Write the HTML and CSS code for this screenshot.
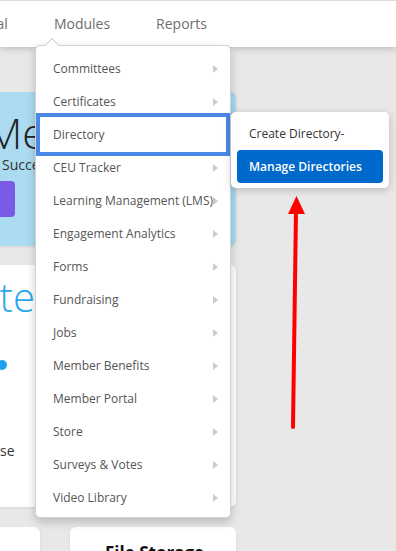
FILE: index.html
```html
<!DOCTYPE html>
<html lang="en">

<head>
    <meta charset="UTF-8">
    <meta name="viewport" content="width=device-width, initial-scale=1.0">
    <title>Modules</title>
    <link rel="stylesheet" href="styles.css">
</head>

<body>
    <!-- Top navigation -->
    <header class="topbar">
        <nav class="main-nav">
            <a href="#">Portal</a>
            <a href="#">Modules</a>
            <a href="#">Reports</a>
        </nav>
    </header>

    <!-- Dashboard cards -->
    <main class="content">
        <section class="card welcome">
            <h1>Members</h1>
            <p>Success starts here</p>
            <button class="btn-primary">Get started</button>
        </section>

        <section class="card updates">
            <h2>Updates</h2>
            <span class="dot"></span>
            <p>Browse</p>
        </section>

        <div class="card-row">
            <section class="card small"></section>
            <section class="card small">
                <h3>File Storage</h3>
            </section>
        </div>
    </main>

    <!-- Modules dropdown -->
    <ul class="dropdown">
        <li>Committees</li>
        <li>Certificates</li>
        <li class="active">Directory</li>
        <li>CEU Tracker</li>
        <li>Learning Management (LMS)</li>
        <li>Engagement Analytics</li>
        <li>Forms</li>
        <li>Fundraising</li>
        <li>Jobs</li>
        <li>Member Benefits</li>
        <li>Member Portal</li>
        <li>Store</li>
        <li>Surveys &amp; Votes</li>
        <li>Video Library</li>
    </ul>

    <div class="submenu">
        <a href="#" class="sub-item">Create Directory-</a>
        <a href="#" class="sub-item selected">Manage Directories</a>
    </div>

    <!-- Annotation arrow -->
    <svg class="annotation" width="396" height="551" viewBox="0 0 396 551">
        <line x1="296" y1="210" x2="293" y2="427" stroke="#ff0000" stroke-width="4" stroke-linecap="round" />
        <polygon points="296.5,196 288,214 305,214" fill="#ff0000" />
    </svg>
</body>

</html>
```

FILE: styles.css
```css
body {
    margin: 0;
    height: 551px;
    overflow: hidden;
    font-family: 'Open Sans', 'Liberation Sans', sans-serif;
    background-color: #e8e8e8;
    color: #333;
}

.topbar {
    height: 46px;
    background-color: #fff;
    border-top: 1px solid #dcdcdc;
    box-shadow: 0 2px 6px rgba(0, 0, 0, 0.18);
}

.main-nav {
    display: flex;
    align-items: center;
    gap: 46px;
    height: 100%;
    margin-left: -31px;
    padding-bottom: 2px;
    box-sizing: border-box;
}

.main-nav a {
    font-size: 14px;
    color: #6e6e6e;
    text-decoration: none;
}

.content {
    width: 362px;
    margin: 45px 0 0 -126px;
    display: flex;
    flex-direction: column;
    gap: 19px;
}

.card {
    background-color: #fff;
    border-radius: 6px;
    box-shadow: 0 1px 3px rgba(0, 0, 0, 0.08);
    box-sizing: border-box;
}

.welcome {
    height: 154px;
    padding: 16px 0 0 127px;
    background-color: #abdbf0;
}

.welcome h1 {
    margin: 0 0 0 -15px;
    font-size: 42px;
    font-weight: 300;
    line-height: 50px;
    color: #222;
}

.welcome p {
    margin: -3px 0 0 1px;
    font-size: 14px;
    white-space: nowrap;
}

.btn-primary {
    display: block;
    width: 140px;
    height: 36px;
    margin: 7px 0 0 -126px;
    border: none;
    border-radius: 4px;
    background-color: #7b5ae6;
    color: #fff;
    font-size: 14px;
}

.updates {
    height: 242px;
    padding: 8px 0 0 126px;
}

.updates h2 {
    margin: 0 0 0 -98px;
    font-size: 40px;
    font-weight: 300;
    line-height: 48px;
    color: #2aa8ee;
}

.dot {
    display: block;
    width: 10px;
    height: 10px;
    margin: 39px 0 0 -3px;
    border-radius: 50%;
    background-color: #1aa3ea;
}

.updates p {
    margin: 71px 0 0 -34px;
    font-size: 14px;
}

.card-row {
    display: grid;
    grid-template-columns: 1fr 1fr;
    gap: 30px;
    margin-top: 1px;
}

.card.small {
    height: 60px;
}

.card.small h3 {
    margin: 0;
    padding: 14px 0 0 35px;
    font-size: 17px;
    font-weight: 700;
    color: #111;
}

/* Dropdown */
.dropdown {
    position: absolute;
    left: 35px;
    top: 45px;
    width: 196px;
    margin: 0;
    padding: 6px 0 3px;
    list-style: none;
    box-sizing: border-box;
    background-color: #fff;
    border: 1px solid #d2d2d2;
    border-radius: 5px;
    box-shadow: 0 4px 10px rgba(0, 0, 0, 0.2);
}

.dropdown::before {
    content: '';
    position: absolute;
    left: 11px;
    top: -6px;
    width: 9px;
    height: 9px;
    background-color: #fff;
    border-top: 1px solid #d2d2d2;
    border-left: 1px solid #d2d2d2;
    transform: rotate(45deg);
}

.dropdown li {
    position: relative;
    display: flex;
    align-items: center;
    justify-content: space-between;
    height: 33px;
    padding: 0 12px 0 17px;
    font-size: 12px;
    color: #555;
    white-space: nowrap;
}

.dropdown li::after {
    content: '';
    border-left: 5px solid #cacaca;
    border-top: 4px solid transparent;
    border-bottom: 4px solid transparent;
}

.dropdown li.active::after {
    display: none;
}

.dropdown li.active::before {
    content: '';
    position: absolute;
    left: 0;
    right: 0;
    top: -5px;
    bottom: -5px;
    border: 4px solid #4a88e6;
}

.submenu {
    position: absolute;
    left: 231px;
    top: 112px;
    width: 158px;
    height: 76px;
    padding: 0 6px;
    box-sizing: border-box;
    background-color: #fff;
    border-radius: 5px;
    box-shadow: 0 2px 8px rgba(0, 0, 0, 0.2);
}

.sub-item {
    display: block;
    padding: 6px 12px 0;
    font-size: 12px;
    color: #333;
    text-decoration: none;
    line-height: 32px;
    white-space: nowrap;
}

.sub-item.selected {
    padding-top: 0;
    line-height: 33px;
    border-radius: 4px;
    background-color: #0069cc;
    color: #fff;
    font-weight: 600;
}

.annotation {
    position: absolute;
    left: 0;
    top: 0;
    pointer-events: none;
}
```
